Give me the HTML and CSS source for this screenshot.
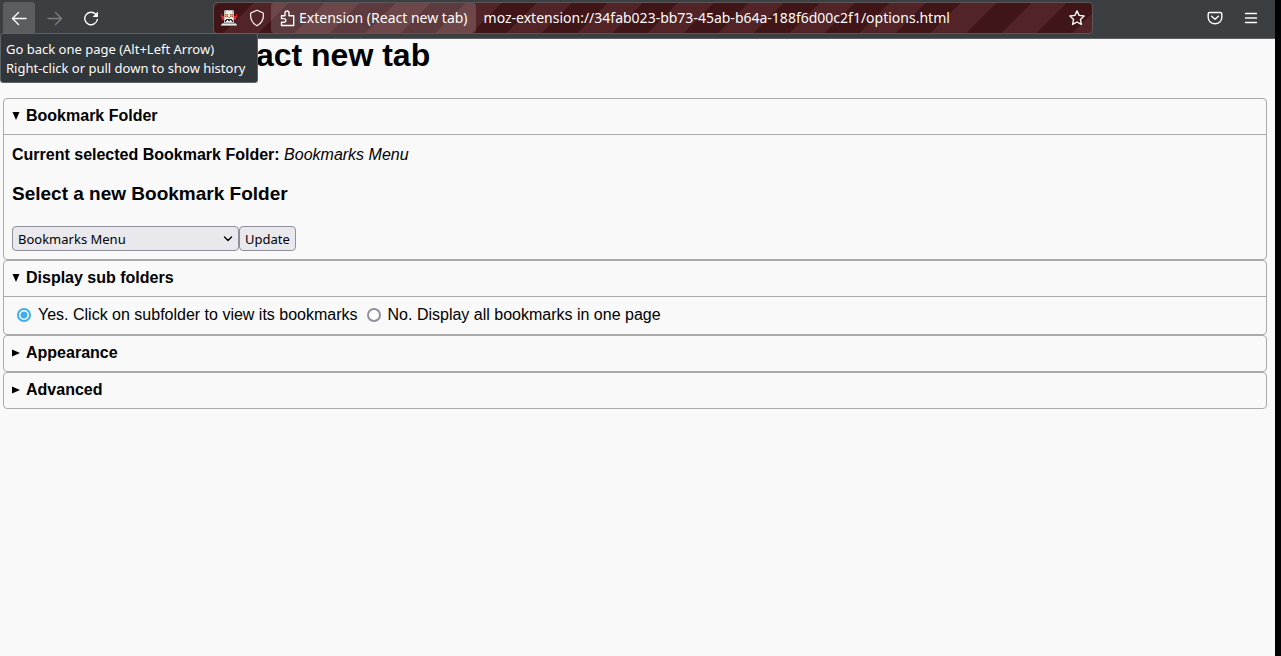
FILE: index.html
```html
<!DOCTYPE html>
<html lang="en">
<head>
<meta charset="utf-8">
<title>React new tab</title>
<link rel="stylesheet" href="styles.css">
</head>
<body>
<div class="window">
  <header class="toolbar">
    <nav class="nav">
      <button class="tool tool-active" aria-label="Back" aria-describedby="back-tip">
        <svg width="16" height="16" viewBox="0 0 16 16"><path d="M15 8.500H1.500M7.500 2.500l-6 6 6 6"/></svg>
      </button>
      <button class="tool" aria-label="Forward" disabled>
        <svg width="16" height="16" viewBox="0 0 16 16"><path d="M1 8.500h13.500M8.500 2.500l6 6-6 6"/></svg>
      </button>
      <button class="tool" aria-label="Reload">
        <svg width="16" height="16" viewBox="0 0 16 16"><path d="M12.800 4.300A6.300 6.300 0 1 0 14.300 9.500"/><path class="solid" d="M15 1.500v5.500H9.500z"/></svg>
      </button>
      <div class="tooltip" role="tooltip" id="back-tip">Go back one page (Alt+Left Arrow)<br>Right-click or pull down to show history</div>
    </nav>
    <div class="urlbar">
      <svg class="robot" width="16" height="16" viewBox="0 0 16 16">
        <path fill="#d92532" d="M0 4h1v2h2v4H1V8H0zM15 4h1v4h-1v2h-2V6h2z"/>
        <path fill="#b9babd" d="M4 0h8l1 1v12H3V1z"/>
        <path fill="#ececee" d="M5 1h6v2h1v9H4V3h1z"/>
        <path fill="#8d5a3a" d="M4 4h3v3H4zM9 4h3v3H9z"/>
        <path fill="#ff9d2e" d="M5 4h1v1h1v1H6v1H5V6H4V5h1zM10 4h1v1h1v1h-1v1h-1V6H9V5h1z"/>
        <path fill="#8e8e92" d="M7 7h2v1H7z"/>
        <path fill="#3a2b2d" d="M5 9h6v1h1v2h-1v-1H5v1H4v-2h1z"/>
        <path fill="#fff" d="M6 10h1v1H6zM9 10h1v1H9z"/>
        <path fill="#9b9ca0" d="M1 13h14v1h1v2H0v-2h1z"/>
        <path fill="#e9e9ea" d="M1 14h14v1H1z"/>
      </svg>
      <svg class="shield" width="16" height="18" viewBox="0 0 16 18"><path d="M8 1.200L14.200 4c.8 5-1.500 10-6.200 12.800C3.300 14 1 9 1.800 4z"/></svg>
      <span class="identity">
        <svg width="15" height="17" viewBox="0 0 15 17"><path d="M1.500 5.700H5V3a2 2 0 0 1 4 0v2.700h4.700v9.800H1.500v-3.300H4a1.800 1.800 0 0 0 0-3.600H1.500z"/></svg>
        <span>Extension (React new tab)</span>
      </span>
      <input class="address" type="text" aria-label="Address" value="moz-extension://34fab023-bb73-45ab-b64a-188f6d00c2f1/options.html">
      <button class="star" aria-label="Bookmark this page">
        <svg width="16" height="16" viewBox="0 0 16 16"><path d="M8 .9l2.100 4.500 5 .6-3.700 3.400 1 5L8 12l-4.400 2.400 1-5L.9 6l5-.6z"/></svg>
      </button>
    </div>
    <div class="actions">
      <button class="tool" aria-label="Save to Pocket">
        <svg width="16" height="16" viewBox="0 0 16 16"><path d="M2.500 2.500h11q1.300 0 1.300 1.300V7.500a6.800 6.300 0 0 1-13.600 0V3.800q0-1.300 1.300-1.300zM4.600 6.200L8 9.300l3.400-3.100"/></svg>
      </button>
      <button class="tool" aria-label="Open application menu">
        <svg width="16" height="16" viewBox="0 0 16 16"><path d="M2.500 3.500h11M2.500 8h11M2.500 12.500h11"/></svg>
      </button>
    </div>
  </header>
  <main class="page">
    <h1 class="title">React new tab</h1>
    <details class="panel" open>
      <summary class="heading">Bookmark Folder</summary>
      <div class="folder">
        <p class="current"><b>Current selected Bookmark Folder:</b> <i>Bookmarks Menu</i></p>
        <h3 class="subtitle">Select a new Bookmark Folder</h3>
        <form class="picker">
          <span class="select-wrap">
            <select class="control select" aria-label="Bookmark folder"><option>Bookmarks Menu</option></select>
            <svg class="chevron" width="10" height="8" viewBox="0 0 10 8"><path d="M1.500 2L5 5.500 8.500 2"/></svg>
          </span>
          <button class="control" type="button">Update</button>
        </form>
      </div>
    </details>
    <details class="panel" open>
      <summary class="heading">Display sub folders</summary>
      <div class="choices">
        <input class="radio" type="radio" name="sub" id="sub-yes" checked><label for="sub-yes">Yes. Click on subfolder to view its bookmarks</label>
        <input class="radio" type="radio" name="sub" id="sub-no"><label for="sub-no">No. Display all bookmarks in one page</label>
      </div>
    </details>
    <details class="panel"><summary class="heading">Appearance</summary></details>
    <details class="panel"><summary class="heading">Advanced</summary></details>
  </main>
</div>
</body>
</html>
```
FILE: styles.css
```css
* { box-sizing: border-box; }
body {
  margin: 0;
  background: #020304;
  color: #000;
  font: 16px/18px "Liberation Sans", Arial, sans-serif;
}
button, input, select { margin: 0; font-family: "Noto Sans", sans-serif; }
svg { flex: none; fill: none; stroke: currentColor; stroke-width: 1.400; stroke-linejoin: round; stroke-linecap: round; }
.solid { fill: currentColor; stroke: none; }

.window {
  display: flex;
  flex-direction: column;
  min-height: 100vh;
  margin-right: 6px;
  background: #f9f9f9;
}
.toolbar {
  display: flex;
  align-items: flex-start;
  height: 39px;
  padding: 2px 6px 0 3px;
  background: #3b3f42;
  border-bottom: 1px solid #5c6063;
  color: #fcfcfc;
  font: 14px/20px "Noto Sans", sans-serif;
}
.nav { position: relative; display: flex; gap: 4px; width: 210px; }
.tool {
  display: flex;
  align-items: center;
  justify-content: center;
  width: 32px;
  height: 32px;
  padding: 0;
  border: 0;
  border-radius: 3px;
  background: none;
  color: inherit;
}
.tool-active { background: #5b5e61; }
.tool:disabled { color: #7c7f81; }
.tooltip {
  position: absolute;
  left: -3px;
  top: 31px;
  z-index: 1;
  min-width: 258px;
  padding: 6px 5px 4px;
  border: 1px solid #5d6265;
  border-radius: 3px;
  background: #31363a;
  font-size: 13px;
  line-height: 19px;
  white-space: nowrap;
}
.urlbar {
  display: flex;
  align-items: center;
  flex: 0 1 880px;
  min-width: 0;
  height: 32px;
  padding: 0 7px;
  border: 1px solid #5e5558;
  border-radius: 4px;
  background: repeating-linear-gradient(135deg, #522428 0 3px, #3f1518 3px 28px, #522428 28px 50px);
}
.robot { stroke: none; }
.shield { margin: 0 6px 0 12px; stroke-width: 1.200; }
.identity {
  display: flex;
  align-items: center;
  gap: 4px;
  height: 30px;
  padding: 0 8px 0 9px;
  border-radius: 3px;
  background: rgba(255, 255, 255, .16);
  white-space: nowrap;
}
.address {
  flex: 1;
  min-width: 0;
  padding: 0 8px 2px;
  border: 0;
  background: none;
  color: inherit;
  font-size: 14px;
}
.star { display: flex; padding: 0; border: 0; background: none; color: inherit; }
.actions { display: flex; gap: 4px; margin-left: auto; padding-right: 2px; }

.page { padding: 0 8px 0 3px; }
.title { margin: 0 0 26px; padding: 0 0 0 212px; font-size: 32px; line-height: 33px; }
.panel { border: 1px solid #aaa; border-radius: 4px; }
.heading {
  display: flex;
  align-items: center;
  gap: 6px;
  padding: 8px 8px 9px;
  font-weight: bold;
  list-style: none;
}
.heading::before {
  content: "";
  width: 8px;
  height: 8px;
  background: #000;
  clip-path: polygon(0 6%, 100% 50%, 0 94%);
}
.panel[open] > .heading::before { clip-path: polygon(6% 0, 94% 0, 50% 100%); }
.panel[open] > .heading { border-bottom: 1px solid #aaa; }
.folder { padding: 11px 8px 8px; }
.current { margin: 0; }
.subtitle { margin: 18px 0 20px; font-size: 19px; line-height: 24px; }
.picker { display: flex; }
.control {
  height: 25px;
  padding: 0 5px;
  border: 1px solid #8f8f9d;
  border-radius: 4px;
  background: #e9e9ed;
  color: #000;
  font-size: 13px;
}
.select-wrap { position: relative; display: flex; }
.select { width: 227px; appearance: none; }
.chevron { position: absolute; right: 6px; top: 9px; pointer-events: none; }
.choices { display: flex; align-items: center; padding: 9px 8px 10px 5px; }
.radio {
  appearance: none;
  width: 14px;
  height: 14px;
  margin: 0 7px 0 9px;
  border: 2px solid #8f8f9d;
  border-radius: 50%;
  background: #fff;
}
.radio:first-child { margin-left: 8px; }
.radio:checked { border-color: #3daee9; background: radial-gradient(circle, #3daee9 3px, #fff 4px); }
```
